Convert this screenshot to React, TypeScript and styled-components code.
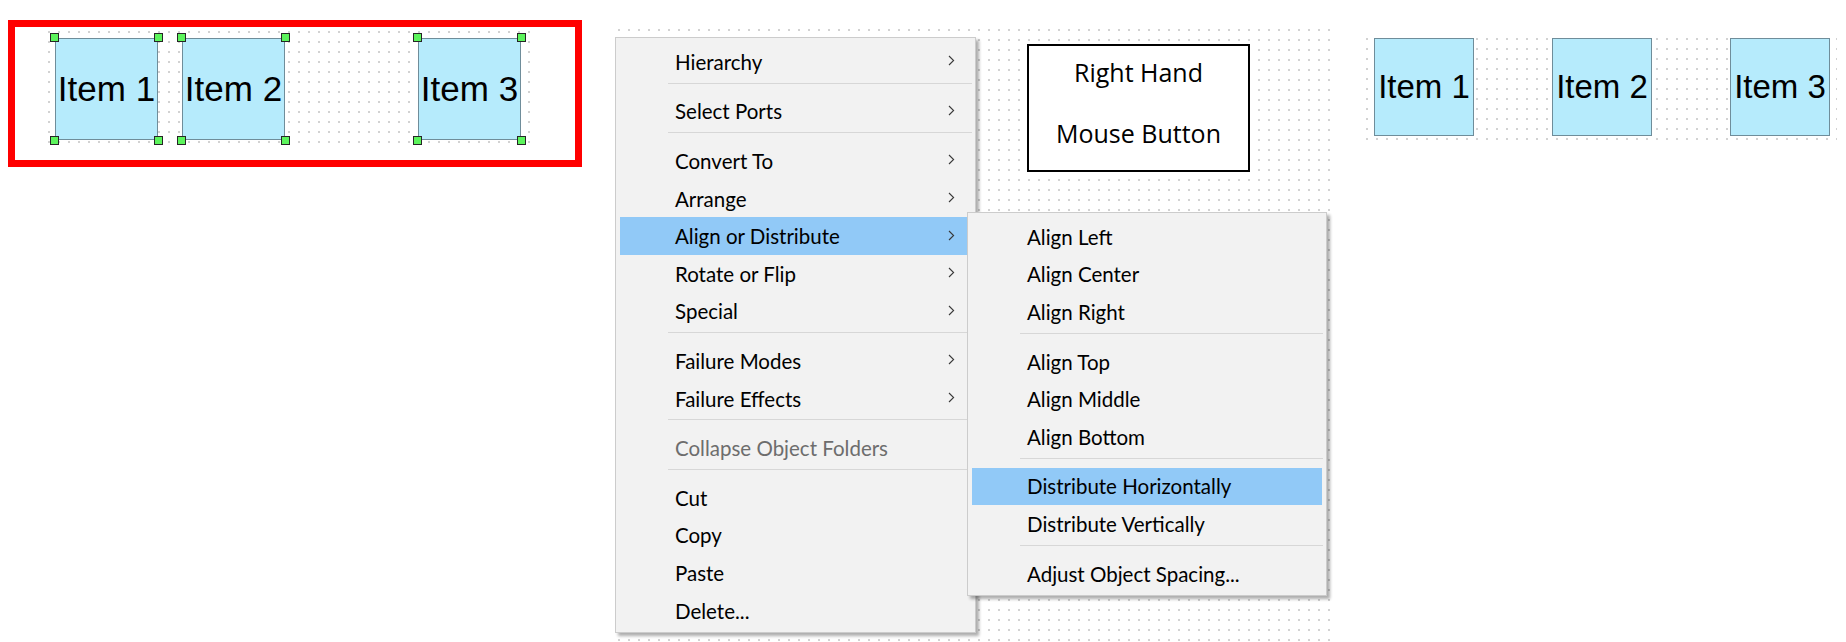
import React from "react";
import styled, { createGlobalStyle } from "styled-components";

const GlobalStyle = createGlobalStyle`
  html, body {
    margin: 0;
    padding: 0;
    background: #ffffff;
  }
  body {
    width: 1846px;
    height: 642px;
    overflow: hidden;
    font-family: "Lato", "Noto Sans", sans-serif;
  }
`;

const dotted = `
  background-color: #ffffff;
  background-image: radial-gradient(circle, #d2d2d2 0.75px, transparent 1.05px);
  background-size: 10px 10px;
  background-position: -1px -1px;
`;

const Stage = styled.div`
  display: flex;
  align-items: flex-start;
  width: 1846px;
  height: 642px;
`;

/* ---------- left: highlighted selection ---------- */

const RedFrame = styled.div`
  box-sizing: border-box;
  flex: none;
  width: 574px;
  height: 147px;
  margin: 20px 0 0 8px;
  border: 7px solid #ff0000;
  padding: 1px 0 0 30px;
  background: #ffffff;
`;

const Canvas = styled.div<{ $w: number; $h: number }>`
  ${dotted}
  box-sizing: border-box;
  width: ${({ $w }) => $w}px;
  height: ${({ $h }) => $h}px;
`;

const SelectionCanvas = styled(Canvas)`
  padding: 10px 0 0 10px;
`;

const ItemRow = styled.div<{ $gap?: number }>`
  display: flex;
  align-items: flex-start;
  gap: ${({ $gap }) => $gap ?? 0}px;
`;

const Block = styled.div<{ $w: number; $h: number; $font: number; $offset?: number }>`
  position: relative;
  box-sizing: border-box;
  flex: none;
  width: ${({ $w }) => $w}px;
  height: ${({ $h }) => $h}px;
  margin-left: ${({ $offset }) => $offset ?? 0}px;
  background: #b6ebfc;
  border: 1.5px solid #6f8d9a;
  display: flex;
  align-items: center;
  justify-content: center;
  font-family: "Liberation Sans", Arial, sans-serif;
  font-size: ${({ $font }) => $font}px;
  color: #000000;
  white-space: nowrap;
`;

const Handle = styled.span<{ $v: "top" | "bottom"; $h: "left" | "right" }>`
  position: absolute;
  box-sizing: border-box;
  width: 9px;
  height: 9px;
  ${({ $v }) => $v}: -6px;
  ${({ $h }) => $h}: -6px;
  background: #5cf45c;
  border: 1px solid #262626;
`;

/* ---------- middle: canvas with context menu ---------- */

const MenuCanvas = styled.div`
  ${dotted}
  position: relative;
  flex: none;
  width: 719px;
  height: 616px;
  margin: 26px 0 0 33px;
`;

const NoteBox = styled.div`
  position: absolute;
  left: 412px;
  top: 18px;
  box-sizing: border-box;
  width: 223px;
  height: 128px;
  border: 2px solid #000000;
  background: #ffffff;
  padding-top: 9px;
  display: flex;
  flex-direction: column;
  align-items: center;
  gap: 27px;
  font-family: "Open Sans", "Noto Sans", sans-serif;
  font-size: 25px;
  line-height: 34px;
  color: #000000;
`;

const Menu = styled.div<{ $left: number; $top: number; $w: number }>`
  position: absolute;
  left: ${({ $left }) => $left}px;
  top: ${({ $top }) => $top}px;
  box-sizing: border-box;
  width: ${({ $w }) => $w}px;
  padding: 5px 0 3px;
  background: #f2f2f2;
  border: 1px solid #cccccc;
  box-shadow: 3px 3px 3px rgba(0, 0, 0, 0.32);
  font-family: "Lato", "Noto Sans", sans-serif;
  font-size: 20.5px;
  color: #000000;
`;

const MenuItem = styled.div<{ $active?: boolean; $disabled?: boolean }>`
  display: flex;
  align-items: center;
  justify-content: space-between;
  height: 37.6px;
  margin: 0 4px;
  padding: 0 16px 0 55px;
  background: ${({ $active }) => ($active ? "#91c9f7" : "transparent")};
  color: ${({ $disabled }) => ($disabled ? "#6d6d6d" : "#000000")};
  white-space: nowrap;
`;

const Separator = styled.div`
  height: 0;
  margin: 2px 3px 9px 52px;
  border-top: 1px solid #d7d7d7;
`;

const ChevronIcon = styled.svg`
  margin-top: -2px;
`;

const Chevron = () => (
  <ChevronIcon width="7" height="11" viewBox="0 0 7 11">
    <path d="M1 1l4.6 4.5L1 10" fill="none" stroke="#3a3a3a" strokeWidth="1.1" />
  </ChevronIcon>
);

/* ---------- right: distributed result ---------- */

const ResultCanvas = styled(Canvas)`
  flex: none;
  margin: 35px 0 0 29px;
  padding: 3px 0 0 11px;
`;

type Entry = { label?: string; sub?: boolean; active?: boolean; disabled?: boolean; sep?: boolean };

const mainMenu: Entry[] = [
  { label: "Hierarchy", sub: true },
  { sep: true },
  { label: "Select Ports", sub: true },
  { sep: true },
  { label: "Convert To", sub: true },
  { label: "Arrange", sub: true },
  { label: "Align or Distribute", sub: true, active: true },
  { label: "Rotate or Flip", sub: true },
  { label: "Special", sub: true },
  { sep: true },
  { label: "Failure Modes", sub: true },
  { label: "Failure Effects", sub: true },
  { sep: true },
  { label: "Collapse Object Folders", disabled: true },
  { sep: true },
  { label: "Cut" },
  { label: "Copy" },
  { label: "Paste" },
  { label: "Delete..." },
];

const alignMenu: Entry[] = [
  { label: "Align Left" },
  { label: "Align Center" },
  { label: "Align Right" },
  { sep: true },
  { label: "Align Top" },
  { label: "Align Middle" },
  { label: "Align Bottom" },
  { sep: true },
  { label: "Distribute Horizontally", active: true },
  { label: "Distribute Vertically" },
  { sep: true },
  { label: "Adjust Object Spacing..." },
];

const renderEntries = (entries: Entry[]) =>
  entries.map((e, i) =>
    e.sep ? (
      <Separator key={i} />
    ) : (
      <MenuItem key={i} $active={e.active} $disabled={e.disabled}>
        <span>{e.label}</span>
        {e.sub && <Chevron />}
      </MenuItem>
    )
  );

const Handles = () => (
  <>
    <Handle $v="top" $h="left" />
    <Handle $v="top" $h="right" />
    <Handle $v="bottom" $h="left" />
    <Handle $v="bottom" $h="right" />
  </>
);

const App: React.FC = () => {
  return (
    <>
      <GlobalStyle />
      <Stage>
        <RedFrame>
          <SelectionCanvas $w={490} $h={119}>
            <ItemRow>
              <Block $w={103} $h={102} $font={35}>
                Item 1
                <Handles />
              </Block>
              <Block $w={103} $h={102} $font={35} $offset={24}>
                Item 2
                <Handles />
              </Block>
              <Block $w={103} $h={102} $font={35} $offset={133}>
                Item 3
                <Handles />
              </Block>
            </ItemRow>
          </SelectionCanvas>
        </RedFrame>

        <MenuCanvas>
          <NoteBox>
            <span>Right Hand</span>
            <span>Mouse Button</span>
          </NoteBox>
          <Menu $left={0} $top={11} $w={361}>
            {renderEntries(mainMenu)}
            <Menu $left={351} $top={174} $w={360}>
              {renderEntries(alignMenu)}
            </Menu>
          </Menu>
        </MenuCanvas>

        <ResultCanvas $w={474} $h={109}>
          <ItemRow $gap={78}>
            <Block $w={100} $h={98} $font={33}>
              Item 1
            </Block>
            <Block $w={100} $h={98} $font={33}>
              Item 2
            </Block>
            <Block $w={100} $h={98} $font={33}>
              Item 3
            </Block>
          </ItemRow>
        </ResultCanvas>
      </Stage>
    </>
  );
};

export default App;
